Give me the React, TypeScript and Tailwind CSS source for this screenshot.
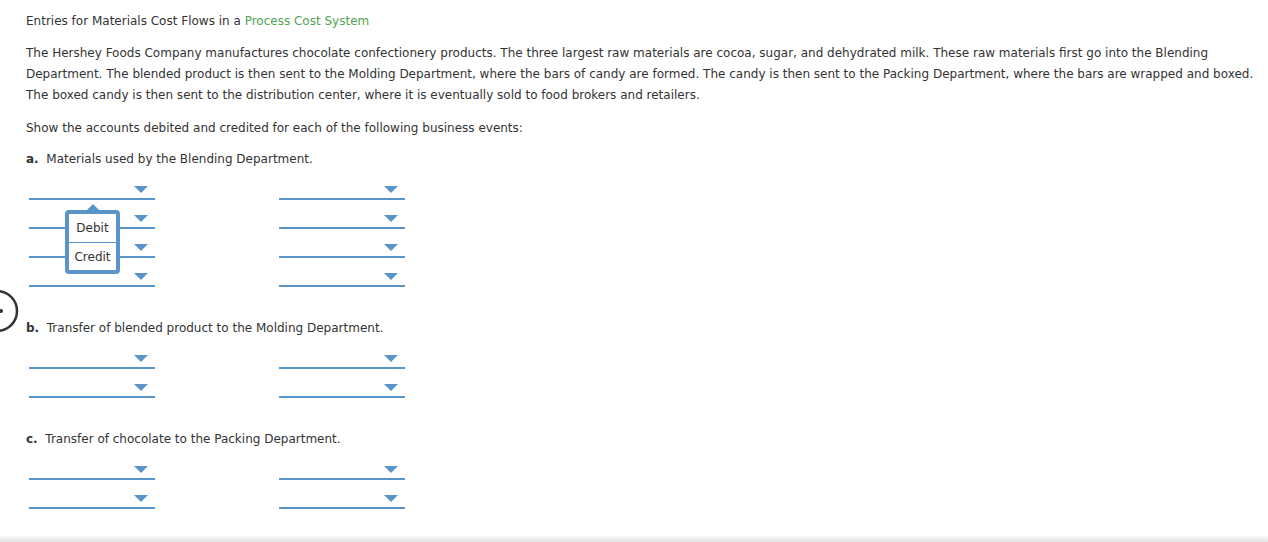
import React from 'react';

function Caret() {
  return (
    <svg width="14" height="7" viewBox="0 0 14 7" className="block">
      <polygon points="0,0 14,0 7,7" fill="#5a95c9" />
    </svg>
  );
}

function Dropdown() {
  return (
    <div className="w-[126px] h-[29px] border-b-2 border-[#5a95c9] flex items-end justify-end pr-[7px] pb-[5px]">
      <Caret />
    </div>
  );
}

function EntryGroup({ rows }: { rows: number }) {
  const list = Array.from({ length: rows });
  return (
    <div className="ml-[3px] mt-[1px] flex gap-[124px]">
      <div className="flex flex-col">
        {list.map((_, i) => (
          <Dropdown key={i} />
        ))}
      </div>
      <div className="flex flex-col">
        {list.map((_, i) => (
          <Dropdown key={i} />
        ))}
      </div>
    </div>
  );
}

function Question({ letter, text }: { letter: string; text: string }) {
  return (
    <p className="leading-[21px]">
      <b className="font-bold">{letter}</b>
      {'\u00a0 '}
      {text}
    </p>
  );
}

export default function App() {
  return (
    <div className="relative w-[1268px] h-[542px] bg-white overflow-hidden text-[#333] text-[12px] font-['DejaVu_Sans','Liberation_Sans',sans-serif]">
      <div className="pl-[26px] pr-[6px] pt-[11px]">
        <h1 className="leading-[21px] font-normal">
          Entries for Materials Cost Flows in a <span className="text-[#52a552]">Process Cost System</span>
        </h1>

        <p className="mt-[11px] leading-[21px]">
          The Hershey Foods Company manufactures chocolate confectionery products. The three largest raw materials are cocoa, sugar, and dehydrated milk. These raw materials first go into the Blending
          <br />
          Department. The blended product is then sent to the Molding Department, where the bars of candy are formed. The candy is then sent to the Packing Department, where the bars are wrapped and boxed.
          <br />
          The boxed candy is then sent to the distribution center, where it is eventually sold to food brokers and retailers.
        </p>

        <p className="mt-[12px] leading-[21px]">Show the accounts debited and credited for each of the following business events:</p>

        <div className="mt-[10px]">
          <Question letter="a." text="Materials used by the Blending Department." />
          <EntryGroup rows={4} />
        </div>

        <div className="mt-[31px]">
          <Question letter="b." text="Transfer of blended product to the Molding Department." />
          <EntryGroup rows={2} />
        </div>

        <div className="mt-[31px]">
          <Question letter="c." text="Transfer of chocolate to the Packing Department." />
          <EntryGroup rows={2} />
        </div>
      </div>

      {/* debit / credit picker open on the first row */}
      <div className="absolute left-[65px] top-[204px] w-[55px]">
        <svg width="12" height="6" viewBox="0 0 12 6" className="block mx-auto">
          <polygon points="0,6 6,0 12,6" fill="#5a95c9" />
        </svg>
        <div className="border-4 border-[#5a95c9] rounded-[4px] bg-white">
          <div className="h-[28px] flex items-center justify-center">Debit</div>
          <div className="h-px bg-[#5a95c9]" />
          <div className="h-[27px] flex items-center justify-center">Credit</div>
        </div>
      </div>

      {/* next arrow button cut by the left edge */}
      <svg width="22" height="46" viewBox="0 0 22 46" className="absolute left-0 top-[288px]">
        <circle cx="-3" cy="23" r="20" fill="none" stroke="#333" strokeWidth="2.5" />
        <circle cx="1" cy="23" r="2" fill="#333" />
      </svg>

      <div className="absolute left-0 right-0 bottom-0 h-[7px] bg-gradient-to-b from-white to-[#e2e2e2]" />
    </div>
  );
}
